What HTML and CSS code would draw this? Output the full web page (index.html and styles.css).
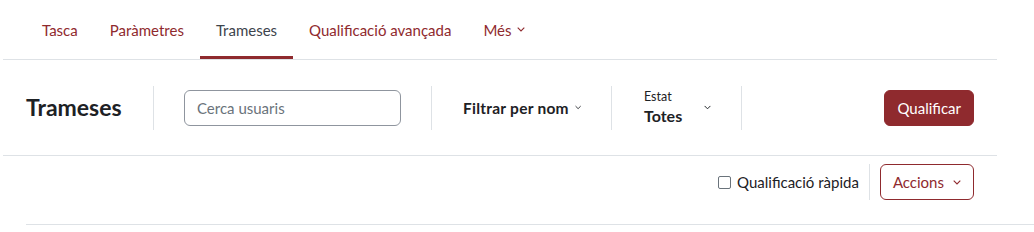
FILE: index.html
```html
<!DOCTYPE html>
<html lang="ca">
<head>
<meta charset="utf-8">
<title>Trameses</title>
<link rel="stylesheet" href="styles.css">
</head>
<body>
<div class="page">
  <nav class="tabs">
    <a class="tab">Tasca</a>
    <a class="tab">Paràmetres</a>
    <a class="tab active">Trameses</a>
    <a class="tab">Qualificació avançada</a>
    <a class="tab">Més <svg class="chev" viewBox="0 0 8 5" width="8" height="5"><polyline points="0.7,0.7 4,4 7.3,0.7"/></svg></a>
  </nav>
  <div class="header">
    <h2 class="title">Trameses</h2>
    <span class="divider"></span>
    <div class="search">Cerca usuaris</div>
    <span class="divider"></span>
    <div class="filter">Filtrar per nom <svg class="chev" viewBox="0 0 8 5" width="8" height="5"><polyline points="0.7,0.7 4,4 7.3,0.7"/></svg></div>
    <span class="divider"></span>
    <div class="status">
      <div class="status-text">
        <span class="status-label">Estat</span>
        <span class="status-value">Totes</span>
      </div>
      <svg class="chev" viewBox="0 0 8 5" width="8" height="5"><polyline points="0.7,0.7 4,4 7.3,0.7"/></svg>
    </div>
    <span class="divider"></span>
    <button class="btn-primary">Qualificar</button>
  </div>
  <div class="actions">
    <label class="quick"><span class="checkbox"></span>Qualificació ràpida</label>
    <span class="divider small"></span>
    <button class="btn-outline">Accions <svg class="chev" viewBox="0 0 8 5" width="8" height="5"><polyline points="0.7,0.7 4,4 7.3,0.7"/></svg></button>
  </div>
</div>
<div class="table-top"></div>
</body>
</html>
```
FILE: styles.css
```css
* { box-sizing: border-box; }
html, body { margin: 0; padding: 0; background: #fff; }
body {
  font-family: Lato, "Noto Sans", "Liberation Sans", sans-serif;
  font-size: 15px;
  color: #1d2125;
  overflow: hidden;
}
.page {
  margin-left: 3px;
  width: 994px;
}
.chev {
  fill: none;
  stroke: currentColor;
  stroke-width: 1.1;
  display: inline-block;
}
.tabs {
  display: flex;
  height: 60px;
  padding: 0 23px;
  border-bottom: 1px solid #dee2e6;
}
.tab {
  display: flex;
  align-items: center;
  gap: 5px;
  padding: 3px 16px 0;
  height: 59px;
  border-bottom: 3px solid transparent;
  color: #8f2a2e;
  cursor: pointer;
}
.tab.active {
  color: #3d444c;
  border-bottom-color: #8f2a2e;
}
.header {
  display: flex;
  align-items: center;
  height: 96px;
  padding: 0 23px;
  border-bottom: 1px solid #dee2e6;
  gap: 30px;
}
.title {
  margin: 0;
  font-size: 23px;
  font-weight: 700;
  line-height: 1.2;
  width: 97px;
  white-space: nowrap;
}
.divider {
  width: 1px;
  height: 44px;
  background: #dee2e6;
}
.search {
  width: 217px;
  height: 36px;
  border: 1px solid #8f959e;
  border-radius: 6px;
  padding: 0 12px;
  display: flex;
  align-items: center;
  color: #6a737b;
}
.filter {
  display: flex;
  align-items: center;
  gap: 6px;
  font-weight: 700;
  font-size: 15.5px;
  letter-spacing: 0.25px;
  margin-left: 1px;
  width: 118px;
  white-space: nowrap;
}
.status {
  display: flex;
  align-items: center;
  gap: 22px;
  margin-left: 2px;
  width: 67px;
}
.status-text {
  display: flex;
  flex-direction: column;
  width: 38px;
}
.status-label {
  font-size: 12.5px;
  line-height: 17px;
}
.status-value {
  font-size: 16px;
  font-weight: 700;
  line-height: 22px;
}
.btn-primary {
  margin-left: auto;
  font: inherit;
  background: #8f2a2e;
  color: #fff;
  border: 1px solid #8f2a2e;
  border-radius: 6px;
  height: 36px;
  padding: 0 12px;
}
.actions {
  display: flex;
  justify-content: flex-end;
  align-items: center;
  padding: 8px 23px 24px;
  gap: 10px;
}
.quick {
  display: flex;
  align-items: center;
  gap: 6px;
}
.checkbox {
  width: 13px;
  height: 13px;
  border: 1px solid #6a737b;
  border-radius: 2px;
}
.divider.small {
  height: 36px;
}
.btn-outline {
  font: inherit;
  color: #8f2a2e;
  background: #fff;
  border: 1px solid #8f2a2e;
  border-radius: 6px;
  height: 36px;
  padding: 0 12px;
  display: flex;
  align-items: center;
  gap: 9px;
}
.table-top {
  margin-left: 26px;
  border-top: 1px solid #dee2e6;
}
```
